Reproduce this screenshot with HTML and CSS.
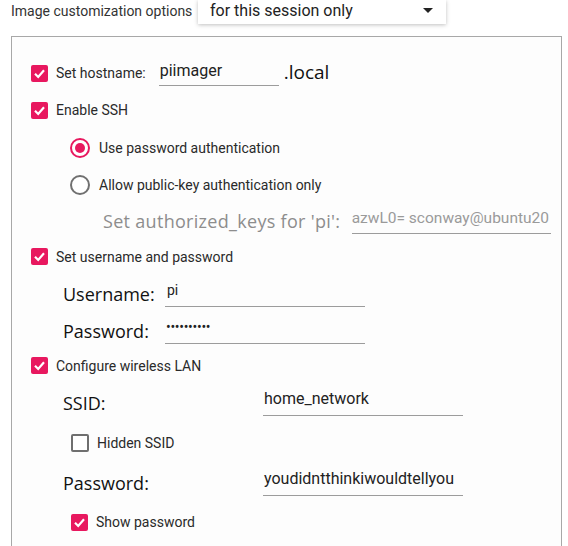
FILE: index.html
```html
<!DOCTYPE html>
<html>
<head>
<meta charset="utf-8">
<link rel="stylesheet" href="styles.css">
</head>
<body>
<div class="header">
  <span class="header-label">Image customization options</span>
  <div class="combo">
    <span class="combo-text">for this session only</span>
    <svg class="combo-arrow" width="10" height="5" viewBox="0 0 10 5"><polygon points="0,0 10,0 5,5" fill="#222"/></svg>
  </div>
</div>
<div class="frame">
  <div class="row r1 ind-cb">
    <span class="cb on"><svg viewBox="0 0 17 17"><polyline points="4,8.8 7.2,12 13,5.2" fill="none" stroke="#fff" stroke-width="2.2"/></svg></span>
    <span class="cb-label">Set hostname:</span>
    <span class="field host">piimager</span>
    <span class="suffix">.local</span>
  </div>
  <div class="row r2 ind-cb">
    <span class="cb on"><svg viewBox="0 0 17 17"><polyline points="4,8.8 7.2,12 13,5.2" fill="none" stroke="#fff" stroke-width="2.2"/></svg></span>
    <span class="cb-label">Enable SSH</span>
  </div>
  <div class="row r3 ind-radio">
    <span class="radio on"><span class="dot"></span></span>
    <span class="cb-label">Use password authentication</span>
  </div>
  <div class="row r4 ind-radio">
    <span class="radio"></span>
    <span class="cb-label">Allow public-key authentication only</span>
  </div>
  <div class="row r5 ind-keys">
    <span class="big-label muted keys-label">Set authorized_keys for 'pi':</span>
    <span class="field keys"><span class="keys-text">azwL0= sconway@ubuntu20</span></span>
  </div>
  <div class="row r6 ind-cb">
    <span class="cb on"><svg viewBox="0 0 17 17"><polyline points="4,8.8 7.2,12 13,5.2" fill="none" stroke="#fff" stroke-width="2.2"/></svg></span>
    <span class="cb-label">Set username and password</span>
  </div>
  <div class="row r7 ind-user">
    <span class="big-label user-label">Username:</span>
    <span class="field user small">pi</span>
  </div>
  <div class="row r8 ind-user">
    <span class="big-label user-label">Password:</span>
    <span class="field user dots">••••••••••</span>
  </div>
  <div class="row r9 ind-cb">
    <span class="cb on"><svg viewBox="0 0 17 17"><polyline points="4,8.8 7.2,12 13,5.2" fill="none" stroke="#fff" stroke-width="2.2"/></svg></span>
    <span class="cb-label">Configure wireless LAN</span>
  </div>
  <div class="row r10 ind-user">
    <span class="big-label wifi-label">SSID:</span>
    <span class="field wifi">home_network</span>
  </div>
  <div class="row r11 ind-sub">
    <span class="cb off"></span>
    <span class="cb-label">Hidden SSID</span>
  </div>
  <div class="row r12 ind-user">
    <span class="big-label wifi-label">Password:</span>
    <span class="field wifi">youdidntthinkiwouldtellyou</span>
  </div>
  <div class="row r13 ind-sub">
    <span class="cb on"><svg viewBox="0 0 17 17"><polyline points="4,8.8 7.2,12 13,5.2" fill="none" stroke="#fff" stroke-width="2.2"/></svg></span>
    <span class="cb-label">Show password</span>
  </div>
</div>
</body>
</html>
```
FILE: styles.css
```css
html, body {
  margin: 0;
  padding: 0;
  background: #ffffff;
  overflow: hidden;
}
body {
  width: 568px;
  height: 546px;
  font-family: Roboto, "Liberation Sans", sans-serif;
  color: #262626;
}
.header {
  display: flex;
  align-items: flex-start;
  height: 24px;
  padding-left: 11px;
}
.header-label {
  font-size: 14px;
  line-height: 22px;
  color: #333;
  width: 187px;
}
.combo {
  width: 248px;
  height: 24px;
  background: #fff;
  box-shadow: 0 1px 4px rgba(0,0,0,0.25);
  display: flex;
  align-items: center;
  padding-left: 12px;
  padding-right: 13px;
  box-sizing: border-box;
  justify-content: space-between;
}
.combo-text {
  font-size: 16px;
  line-height: 20px;
  color: #222;
  margin-top: -3px;
}
.combo-arrow {
  margin-top: -3px;
}
.frame {
  margin: 12px 0 0 11px;
  width: 551px;
  height: 520px;
  box-sizing: border-box;
  border: 1px solid #a8a8a8;
  background: #fdfdfd;
  padding-top: 18px;
}
.row {
  display: flex;
  align-items: center;
}
.r1 { height: 36px; }
.r2 { height: 38px; }
.r3 { height: 37px; }
.r4 { height: 37px; }
.r5 { height: 36px; }
.r6 { height: 35px; }
.r7 { height: 39px; }
.r8 { height: 36px; }
.r9 { height: 33px; }
.r10 { height: 42px; }
.r11 { height: 37px; }
.r12 { height: 43px; }
.r13 { height: 36px; }

.ind-cb { padding-left: 19px; }
.ind-radio { padding-left: 58px; }
.ind-keys { padding-left: 91px; }
.ind-user { padding-left: 51px; }
.ind-sub { padding-left: 59px; }

.cb {
  width: 17px;
  height: 17px;
  border-radius: 2px;
  box-sizing: border-box;
  flex: none;
  display: block;
}
.cb svg { display: block; width: 17px; height: 17px; }
.cb.on { background: #e8185f; }
.cb.off { border: 2px solid #6f6f6f; background: #fff; width: 18px; height: 18px; }
.cb-label {
  font-size: 14px;
  margin-left: 8px;
  color: #2a2a2a;
}
.radio {
  width: 20px;
  height: 20px;
  border-radius: 50%;
  border: 2px solid #707070;
  box-sizing: border-box;
  flex: none;
  display: flex;
  align-items: center;
  justify-content: center;
  background: #fff;
}
.radio.on { border-color: #e8185f; }
.radio .dot {
  width: 10px;
  height: 10px;
  border-radius: 50%;
  background: #e8185f;
}
.ind-radio .cb-label { margin-left: 9px; }

.field {
  height: 26px;
  box-sizing: border-box;
  border-bottom: 1px solid #9c9c9c;
  font-size: 16px;
  line-height: 21px;
  color: #222;
  padding-left: 1px;
  flex: none;
  overflow: hidden;
  white-space: nowrap;
}
.host { width: 120px; margin-left: 13px; }
.suffix {
  font-family: "Open Sans", "DejaVu Sans", sans-serif;
  font-size: 19px;
  margin-left: 5px;
  color: #111;
  margin-top: -2px;
}
.big-label {
  font-family: "Open Sans", "DejaVu Sans", sans-serif;
  font-size: 18px;
  color: #111;
  flex: none;
}
.muted { color: #8d8d8d; }
.keys-label {
  width: 249px;
  letter-spacing: 0.3px;
  white-space: nowrap;
}
.keys {
  width: 199px;
  display: flex;
  justify-content: flex-end;
  color: #9a9a9a;
  font-size: 15.5px;
  padding-right: 2px;
  padding-left: 0;
}
.keys-text { flex: none; }
.user-label { width: 102px; }
.user { width: 200px; }
.small { font-size: 14px; line-height: 18px; padding-left: 2px; }
.dots { font-size: 14px; line-height: 18px; letter-spacing: -0.3px; }
.wifi-label { width: 200px; }
.wifi { width: 200px; line-height: 18px; }
```
